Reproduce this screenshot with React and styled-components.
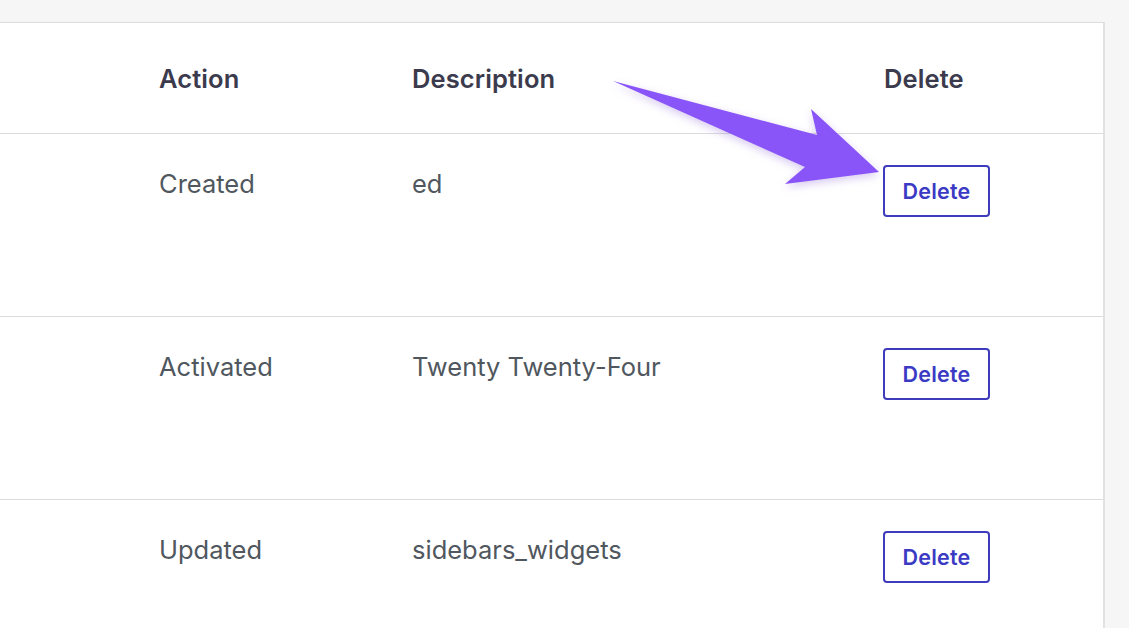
import styled, { createGlobalStyle } from 'styled-components';

const GlobalStyle = createGlobalStyle`
  html, body {
    margin: 0;
    padding: 0;
    background: #f6f6f6;
    font-family: Inter, "Noto Sans", sans-serif;
    overflow: hidden;
  }
`;

const Page = styled.div`
  position: relative;
  width: 1129px;
  height: 628px;
  padding-top: 22px;
  box-sizing: border-box;
  overflow: hidden;
`;

const Panel = styled.div`
  width: 1105px;
  background: #fff;
  border-top: 1px solid #dcdcde;
  border-right: 2px solid #e2e2e4;
  box-sizing: border-box;
`;

const Row = styled.div`
  display: grid;
  grid-template-columns: 159px 253px 472px 1fr;
  height: ${({ head }) => (head ? '110px' : '182px')};
  align-items: ${({ head }) => (head ? 'center' : 'start')};
  border-bottom: 1px solid #dcdcde;
`;

const HeadCell = styled.div`
  font-size: 25.5px;
  font-weight: 600;
  color: #3c3b4e;
  letter-spacing: 0.1px;
`;

const Cell = styled.div`
  font-size: 25.5px;
  color: #50575e;
  padding-top: 35px;
  line-height: 30px;
`;

const DeleteButton = styled.button`
  margin-top: 31px;
  width: 107px;
  height: 52px;
  margin-left: -1px;
  border: 2px solid #3e3cbc;
  border-radius: 4px;
  background: #fff;
  color: #3b3ac4;
  font-family: Inter, "Noto Sans", sans-serif;
  font-size: 21.5px;
  font-weight: 600;
  letter-spacing: 0.2px;
  cursor: pointer;
`;

const ArrowSvg = styled.svg`
  position: absolute;
  left: 0;
  top: 0;
  pointer-events: none;
  filter: drop-shadow(0 3px 4px rgba(90, 40, 200, 0.25));
`;

const rows = [
  { action: 'Created', desc: 'ed' },
  { action: 'Activated', desc: 'Twenty Twenty-Four' },
  { action: 'Updated', desc: 'sidebars_widgets' },
];

const App = () => (
  <Page>
    <GlobalStyle />
    <Panel>
      <Row head>
        <div />
        <HeadCell>Action</HeadCell>
        <HeadCell>Description</HeadCell>
        <HeadCell>Delete</HeadCell>
      </Row>
      {rows.map((r) => (
        <Row key={r.action}>
          <div />
          <Cell>{r.action}</Cell>
          <Cell>{r.desc}</Cell>
          <div>
            <DeleteButton>Delete</DeleteButton>
          </div>
        </Row>
      ))}
    </Panel>
    <ArrowSvg width="1129" height="628" viewBox="0 0 1129 628">
      <polygon
        points="613,81 817,135 811,109 879,172 785,184 805,167"
        fill="#8a55f8"
        strokeLinejoin="round"
      />
    </ArrowSvg>
  </Page>
);

export default App;
